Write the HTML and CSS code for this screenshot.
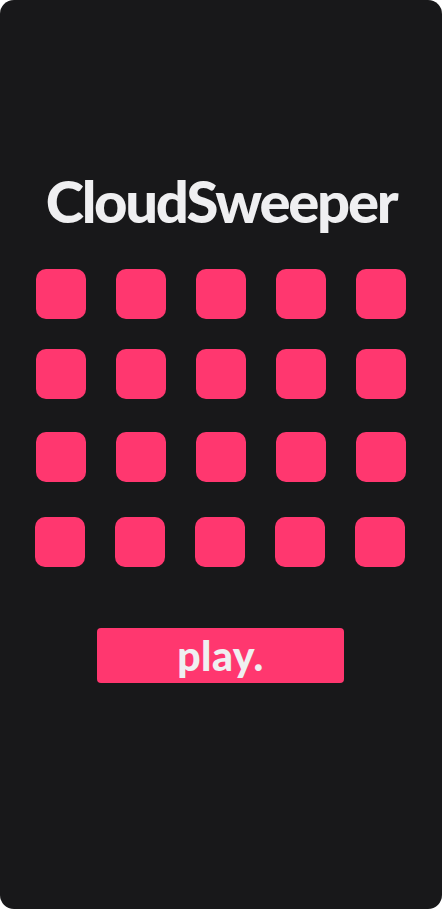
FILE: index.html
```html
<!DOCTYPE html>
<html>
<head>
<meta charset="utf-8">
<link rel="stylesheet" href="styles.css">
</head>
<body>
<main class="card">
  <h1 class="title">CloudSweeper</h1>
  <div class="board">
    <div class="row"><span class="tile"></span><span class="tile"></span><span class="tile"></span><span class="tile"></span><span class="tile"></span></div>
    <div class="row row-2"><span class="tile"></span><span class="tile"></span><span class="tile"></span><span class="tile"></span><span class="tile"></span></div>
    <div class="row row-3"><span class="tile"></span><span class="tile"></span><span class="tile"></span><span class="tile"></span><span class="tile"></span></div>
    <div class="row row-4"><span class="tile"></span><span class="tile"></span><span class="tile"></span><span class="tile"></span><span class="tile"></span></div>
  </div>
  <button class="play">play.</button>
</main>
</body>
</html>
```
FILE: styles.css
```css
html, body {
  margin: 0;
  padding: 0;
  background: #ffffff;
}
.card {
  width: 442px;
  height: 909px;
  box-sizing: border-box;
  background: #18181a;
  border-radius: 14px;
  display: flex;
  flex-direction: column;
  align-items: center;
  padding-top: 166px;
  font-family: "Lato", "DejaVu Sans", sans-serif;
}
.title {
  margin: 0;
  color: #efeff1;
  font-size: 58px;
  font-weight: 900;
  line-height: 70px;
  letter-spacing: -2.3px;
}
.board {
  margin-top: 33px;
  display: flex;
  flex-direction: column;
}
.row {
  display: flex;
  gap: 30px;
}
.row-2 { margin-top: 30px; }
.row-3 { margin-top: 33px; }
.row-4 { margin-top: 35px; margin-left: -1px; }
.tile {
  width: 50px;
  height: 50px;
  border-radius: 10px;
  background: #ff376f;
}
.play {
  margin-top: 61px;
  margin-right: 1px;
  width: 247px;
  height: 55px;
  border: none;
  border-radius: 4px;
  background: #ff376f;
  color: #efeff1;
  font-family: "Lato", "DejaVu Sans", sans-serif;
  font-size: 41px;
  font-weight: 900;
  line-height: 55px;
  padding: 0;
  letter-spacing: 0.5px;
}
```
